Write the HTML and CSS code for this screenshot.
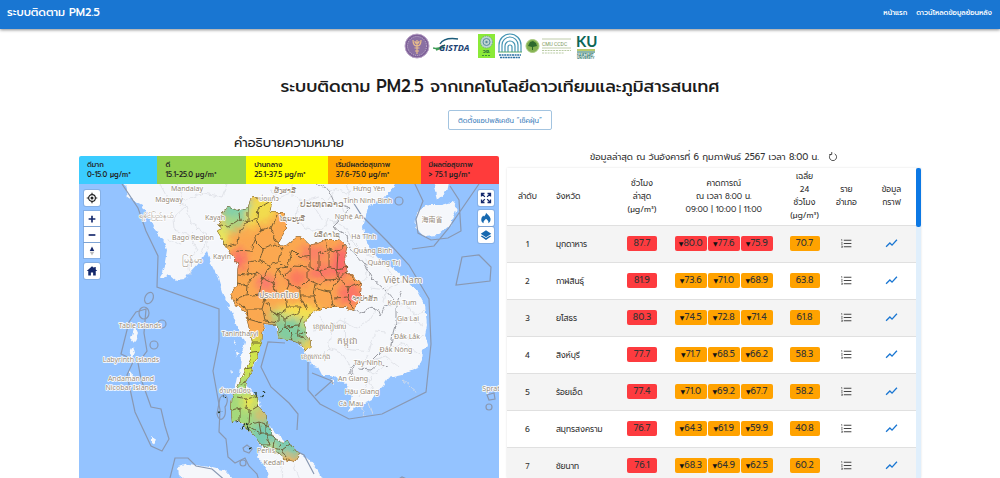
FILE: index.html
```html
<!DOCTYPE html>
<html lang="th">
<head>
<meta charset="utf-8">
<meta name="viewport" content="width=device-width, initial-scale=1">
<title>ระบบติดตาม PM2.5</title>
<link rel="stylesheet" href="styles.css">
</head>
<body>
<svg class="defs" aria-hidden="true">
  <symbol id="list" viewBox="0 0 24 24"><path d="M2 17h2v.5H3v1h1v.5H2v1h3v-4H2v1zm1-9h1V4H2v1h1v3zm-1 3h1.800L2 13.100v.9h3v-1H3.200L5 10.900V10H2v1zm5-6v2h14V5H7zm0 14h14v-2H7v2zm0-6h14v-2H7v2z" fill="#444"/></symbol>
  <symbol id="chart" viewBox="0 0 24 24"><path d="M2 18l7-7 4 4 9-10" fill="none" stroke="#1976d2" stroke-width="2.400"/></symbol>
</svg>
<header class="topbar">
  <a class="brand" href="#">ระบบติดตาม PM2.5</a>
  <nav class="nav"><a href="#">หน้าแรก</a><a href="#">ดาวน์โหลดข้อมูลย้อนหลัง</a></nav>
</header>
<main class="page">
  <div class="logos">
    <svg width="26" height="26" viewBox="0 0 26 26"><circle cx="13" cy="13" r="12" fill="#7d6098" stroke="#b9a3c6"/><circle cx="13" cy="13" r="9.500" fill="#8a70a3" stroke="#d8cbe0" stroke-width=".8" stroke-dasharray="1 1"/><path d="M13 21V7M9 7c0 8 8 8 8 0M11 8c0 3 4 3 4 0M10.500 15h5M11 18h4" fill="none" stroke="#e8bd8b" stroke-width="1.200"/></svg>
    <svg width="42" height="20" viewBox="0 0 42 20"><path d="M0 12c5 2 8-1 12-3M3 14l8-3" fill="none" stroke="#3f9c56" stroke-width="1.500"/><text class="logo-gistda" x="6" y="15">GISTDA</text><path d="M7 8C10 3 18 2 25 3" fill="none" stroke="#1b5b7a" stroke-width="1.400"/></svg>
    <svg width="17" height="26" viewBox="0 0 17 26"><path fill="#8bea38" d="M0 1h17v24H0z"/><circle cx="8.500" cy="9" r="6" fill="#bed5d2" stroke="#6d9b98" stroke-dasharray="1 1"/><circle cx="8.500" cy="9" r="3.500" fill="none" stroke="#5a8ca0"/><circle cx="8.500" cy="9" r="1.200" fill="#5a8ca0"/><text class="logo-vch" x="8.500" y="20">วช.</text><path d="M4 22.500h9" stroke="#3d8d38" stroke-dasharray="2 1"/></svg>
    <svg width="24" height="26" viewBox="0 0 24 26"><g fill="none" stroke="#4494b3" stroke-width="1.200"><path d="M1 19v-7a11 11 0 0 1 22 0v7M4 19v-7a8 8 0 0 1 16 0v7M7 19v-6a5 5 0 0 1 10 0v6M10 19v-5a2 2 0 0 1 4 0v5"/></g><path d="M0 19h24" stroke="#5ba96e"/><path d="M1 22h22M2 24.500h20" stroke="#2b71a3" stroke-width="1.400" stroke-dasharray="2 .6"/></svg>
    <svg width="48" height="20" viewBox="0 0 48 20"><circle cx="7.500" cy="10" r="6.500" fill="#83b150" stroke="#a7ca7c"/><path d="M7 14v-3l-4-1 2-4 3-1 3 2 1 3-4 1v3z" fill="#2d692c"/><path d="M17 3h29M17 12h29" stroke="#afbf95" stroke-width=".8"/><text class="logo-cmu" x="17" y="9.500">CMU CCDC</text><path d="M17 14.500h29M17 17h22" stroke="#b9cba4" stroke-dasharray="2 .8"/></svg>
    <svg width="21" height="28" viewBox="0 0 21 28"><text class="logo-ku" x="0" y="15">KU</text><path d="M1 18h18" stroke="#a2b93b" stroke-width="1.500"/><path d="M1 20h18" stroke="#176a5d"/><text class="logo-small" x="1" y="24">KASETSART</text><text class="logo-small" x="1" y="27">UNIVERSITY</text></svg>
  </div>
  <h1>ระบบติดตาม PM2.5 จากเทคโนโลยีดาวเทียมและภูมิสารสนเทศ</h1>
  <button class="install" type="button">ติดตั้งแอปพลิเคชัน “เช็คฝุ่น”</button>
  <div class="columns">
    <section class="map-panel">
      <h2>คำอธิบายความหมาย</h2>
      <div class="legend">
        <div class="lv1">ดีมาก<br>0-15.0 µg/m³</div>
        <div class="lv2">ดี<br>15.1-25.0 µg/m³</div>
        <div class="lv3">ปานกลาง<br>25.1-37.5 µg/m³</div>
        <div class="lv4">เริ่มมีผลต่อสุขภาพ<br>37.6-75.0 µg/m³</div>
        <div class="lv5">มีผลต่อสุขภาพ<br>&gt; 75.1 µg/m³</div>
      </div>
      <div class="map">
        <svg class="canvas" viewBox="79 184 420 294" preserveAspectRatio="xMidYMin slice" role="img" aria-label="แผนที่ PM2.5">
          <defs>
            <path id="thaiPath" d="M217 232L221 229 219 221 223 210 228 207 237 210 248 207 250 200 253 197 262 198 268 197 272 202 270 212 283 212 286 220 286 230 280 240 280 245 285 246 292 240 298 237 304 239 310 245 318 243 325 240 340 240 347 247 345 258 348 272 356 279 362 282 360 303 353 311 345 308 322 308 313 313 304 323 311 342 310 348 305 351 302 345 295 342 285 340 278 338 277 325 265 324 263 333 262 342 257 357 252 370 245 385 248 393 258 396 258 405 266 413 269 427 275 438 283 443 288 441 292 447 300 453 295 462 285 460 275 452 262 446 257 438 245 427 239 420 232 423 231 410 232 397 237 388 242 377 250 360 252 342 248 325 245 312 235 305 230 293 237 285 237 275 238 265 232 255 225 245z"/>
            <clipPath id="thai"><use href="#thaiPath"/></clipPath>
            <filter id="soft" x="-50%" y="-50%" width="200%" height="200%"><feGaussianBlur stdDeviation="4"/></filter>
            <filter id="rough" color-interpolation-filters="sRGB"><feTurbulence type="fractalNoise" baseFrequency=".18" numOctaves="2" seed="4"/><feDisplacementMap in="SourceGraphic" scale="5" xChannelSelector="R" yChannelSelector="G"/></filter>
          </defs>
          <path class="sea" d="M-400 0h1400v900H-400z"/>
          <g class="land" filter="url(#rough)">
            <path d="M122 176L125 185 128 197 142 205 147 213 153 227 163 240 167 250 165 262 160 278 170 276 176 281 185 280 190 272 199 262 207 252 212 266 218 278 223 295 232 312 238 328 245 342 241 355 240 368 237 383 232 397 231 415 245 427 257 438 262 448 258 457 267 470 268 482 324 482 318 470 308 459 300 453 285 442 270 427 262 410 257 397 250 390 245 382 252 370 257 360 262 340 265 325 275 323 278 338 298 342 305 352 310 357 312 366 318 367 322 375 332 375 345 383 352 393 350 404 348 412 356 408 372 400 382 387 388 378 402 375 418 368 422 360 423 350 428 345 425 335 427 325 425 305 418 292 402 275 390 265 378 258 370 249 365 237 363 227 368 207 385 197 395 185 405 176z"/>
            <path d="M420 210L428 205 441 205 452 202 457 208 450 225 438 235 422 236 415 227 416 218z"/><path d="M431 178h18l-3 14-8 7-2-8z"/>
            <path d="M135 326l3 7-4 10-3-4zM133 346l2 8-5 5 1-9zM130 370l3 4-1 7-2-3zM151 436l4 3-1 5-3-2zM178 467l11-3 20 3 17 4 8 9h-49l-6-5z"/>
            <path d="M234 340l3 3-2 2zM235 350l4 3-3 4zM231 370l2 2-1 2zM331 379l3 1 0 6-3-3z"/>
          </g>
          <g class="faint" filter="url(#rough)">
            <path d="M160 184l8 15 18 7 5 17 16 11 0 16M177 184l7 16 20-7 18 4 5-13M186 206l-13 12 1 12 16 5 8-8M168 240l12 4 10-9 7 15-9 13 2 12M207 234l-5 21M270 190l9 8 11-5 12 8 18-4 9 9 12-3 4 13-11 8M292 184v13M300 201l-4 15 9 13 17 2 6-12 18 9 7 13M328 200l9-12M346 184l4 14 15 5M325 188l21 5 16-9M315 208l8 13M351 240l13 13 10 4M366 257l1 20-7 8M368 262l18 4 8 12M370 288l17 2 15-8M386 287l-3 15M390 306l15-3 8 11 12-3M397 323l14-5 12 8M394 335l18 4 12-4M386 350l17-7 17 12M372 361l14-4 13 10M319 316l12 17-3 15 14 5 9 14M312 330l17-2 11-8 16 8 14-8 7-12M345 319l1 30 23 3 6-21 12 1M330 348l-10 10M368 354l-6 11 11 9 13-8M351 368l4 13 13-3 5 12M360 396l12-20M275 459l7 9 1 12M293 463l7 17M402 379l16 14M361 407l4 9M369 403l4 11"/>
          </g>
          <g class="frontier" filter="url(#rough)"><path d="M317 184l12 6 5 12 16 6-13 15-4 4 14 8 3 13 14 16 8 14 13 12 9 10M353 310l8 3 8-5 8 1 3 7 5-10 11-2 6-13M396 304l0 18-3 11-2 13-12 7-9 9-12-1-10 13M359 369l12 1 7-6 10 3M350 374l5-6M331 378l2 7"/></g>
          <g class="maritime"><path d="M122 184l16 24 8 23 12 25-1 31 62 22v32l-6 30 7 39-1 22 7 7 2 18 7 6 10-5 4 8 8 8 5 18 5 8M308 362v28l12 14 29 15 33-5 44-22 5-48-2-45-20-34-22-24-25-25-9-14M450 186l9 14 2 31-13 7-17 2-13-7-2-14 7-18-9-19M479 184l-31 45-14 17-22 3M456 285l6-28 17-2 12 12-1 14zM285 343l-17-1-7 25 10 20 18 16 9 11-1 16M294 450l10 5 10 19M132 359l-11-5 8-32 7-10 10-3-2 24 3 18-9 12 3 16 10 28 10 2 4 17 4 13-7 12-11-5-16-34-8-37 6-13M170 478l5-20 13 0 8 8 16 3 15 13M397 480l5-3 7 3M312 373l20 8-17 15"/><ellipse cx="149" cy="298" rx="4" ry="6" transform="rotate(25 149 298)"/><ellipse cx="144" cy="313" rx="5" ry="6"/><circle cx="162" cy="324" r="4"/><circle cx="154" cy="345" r="4"/><circle cx="399" cy="201" r="4"/><circle cx="489" cy="407" r="3"/><path d="M487 395l7-2 1 6-6 1zM220 398c6-9 10 3 5 9 2 12-6 17-8 7zM243 448l4-3 5 4-3 4-5-2z"/><circle cx="243" cy="463" r="3"/></g>
          <g filter="url(#rough)">
            <g clip-path="url(#thai)">
              <path class="heat-base" d="M200 180h180v300H200z"/>
              <g filter="url(#soft)">
                <ellipse cx="238" cy="211" rx="17" ry="14" fill="#7fcfac"/><ellipse cx="263" cy="207" rx="13" ry="17" fill="#f2dc4d"/><ellipse cx="221" cy="235" rx="8" ry="14" fill="#e8e85d"/><ellipse cx="232" cy="223" rx="10" ry="8" fill="#a9d784"/><ellipse cx="250" cy="220" rx="5" ry="10" fill="#f2dc4d"/>
                <ellipse cx="239" cy="260" rx="7" ry="11" fill="#fa6d6c"/><ellipse cx="266" cy="283" rx="10" ry="8" fill="#fa786e"/><ellipse cx="314" cy="253" rx="14" ry="8" fill="#fb7f67"/><ellipse cx="341" cy="262" rx="9" ry="17" fill="#fb686c"/><ellipse cx="297" cy="278" rx="10" ry="9" fill="#fb775f"/><ellipse cx="322" cy="272" rx="14" ry="8" fill="#fb7568"/><ellipse cx="350" cy="294" rx="13" ry="11" fill="#fb7566"/>
                <ellipse cx="296" cy="311" rx="24" ry="5" fill="#f7ee4d"/><ellipse cx="292" cy="331" rx="20" ry="14" fill="#82cda0"/><ellipse cx="276" cy="315" rx="8" ry="5" fill="#a5d984"/><ellipse cx="309" cy="322" rx="8" ry="6" fill="#dfe95c"/><ellipse cx="307" cy="347" rx="5" ry="6" fill="#e4ec50"/><path d="M235 337h34v60h-40z" fill="#d0e44e"/><path d="M215 378h50v60h-50z" fill="#a4d97c"/><ellipse cx="278" cy="440" rx="28" ry="24" fill="#78cbb2"/><ellipse cx="263" cy="417" rx="10" ry="10" fill="#86cfa0"/><ellipse cx="249" cy="402" rx="7" ry="6" fill="#ffea30"/><circle cx="261" cy="415" r="5" fill="#ffae28"/><circle cx="286" cy="459" r="6" fill="#ffb32d"/><circle cx="272" cy="447" r="4" fill="#f4e53c"/>
              </g>
            </g>
            <g class="province" clip-path="url(#thai)">
              <path d="M238 209l2 10 8 3 0-15M248 222l-8 9-2 12-10 3-9-8M240 219l-12 8-10-3M248 222l9-4 1-10 10-6M257 218l4 13-7 9-3 12-15-1M261 231l10-3 6-13M271 228l5 13 5 3M254 240l9 9-3 11-11 2-2 13-9-1M263 249l12-5 7 5-3 13-10 3-9-5M247 275l10-2 6 5 7-13M232 282l15 3 10-12M247 285l-1 11-11 4M246 296l13-2 4-16 10 5 4-14 10-2 5-18M279 262l8 5M235 300l12 9 15 0 3-10-6-5M265 299l11-6-3-10M276 293l9 4 4-14-12-14M285 297l2 11-9 7-7-4-6-12M247 309l1 10 14 4M263 309l2 12 13 2 0-8M268 325l5 6M275 313l10 5 14-6 1-5-13 0M289 283l11 5 8-8 0-13-14-1-9 10M292 249l8 8 10-2 0-12M310 255l0 12 9 4 0-17 9-5-4-10M319 271l10-3 0-19 9 3 8-9M338 252l-1 17-8-1M337 269l11-3M308 280l12 5 7-5-8-9M327 280l12-1-2-10M339 279l7-8 9 10M300 288l0 8 7 13M300 296l14 0 2-12M314 296l4 13M316 289l14 3 9-13M330 292l4 17M339 279l10 8-2 10-13 1M347 297l7 12M349 287l12-4M285 318l0 9 14-1 4-11M285 327l-6 5M299 326l-2 8 9 6M285 327l7 7-2 8M299 334l9-3M250 343h11M249 353l10-2M246 369l10-2M240 384l13-5M237 397l10 2 10-3M232 410l14-3 4 3 10-6M247 399l-1 8M240 410l0 14-4 2M250 410l-1 15-10-1M249 425l10-3 13 5M259 422l2 12-12-7M261 434l14 0M266 422l0 12 4 11-10 0M275 434l-2 14 9 2 12-9M279 447l5-9 8 2M282 450l6 9"/>
              <use href="#thaiPath"/>
            </g>
            <path class="islands" d="M223 396l2 1M219 411l2 1M236 423l2-2M241 428l3-3M246 424l3 6M248 449l4-1M256 392v4M262 391l2 2M262 396l1 2"/>
          </g>
          <g class="labels">
            <text x="187" y="191">Mandalay</text><text x="169" y="202">Magway</text><text x="156" y="218">ရခိုင်ပြည်နယ်</text><text x="215" y="220">Kayah</text><text x="193" y="240">Bago Region</text><text x="222" y="259">Kayin</text><text class="country" x="192" y="263">မြန်မာ</text>
            <text x="269" y="201">บ่อแก้ว</text><text x="285" y="193">ຜົ້ງສາລີ</text><text class="country" x="322" y="207">ປະເທດລາວ</text><text x="292" y="221">ໄຊຍະບູລີ</text><text x="369" y="191">Hưng Yên</text><text x="368" y="203">Tỉnh Ninh Bình</text><text x="349" y="219">Nghệ An</text><text x="327" y="237">ບໍລິຄຳໄຊ</text><text x="364" y="239">Hà Tĩnh</text><text x="373" y="253">Quảng Bình</text><text x="384" y="265">Quảng Trị</text><text class="country" x="403" y="283">Việt Nam</text><text x="365" y="301">ຈຳປາສັກ</text><text x="402" y="305">Kon Tum</text><text x="408" y="321">Gia Lai</text><text x="407" y="339">Đắk Lắk</text><text x="396" y="352">Đắk Nông</text><text x="368" y="365">Tây Ninh</text><text x="353" y="381">An Giang</text><text x="362" y="394">Hậu Giang</text><text x="351" y="406">Cà Mau</text>
            <text class="country" x="279" y="298">ประเทศไทย</text><text x="329" y="329">ខេត្តសៀមរាប</text><text class="country" x="347" y="344">កម្ពុជា</text><text x="315" y="359">ខេត្តកោះកុង</text><text x="240" y="336">Tanintharyi</text><text x="140" y="328">Table Islands</text><text x="131" y="362">Labyrinth Islands</text><text x="131" y="381">Andaman and</text><text x="131" y="390">Nicobar Islands</text><text x="235" y="393">อำเภอเมือง</text><text x="266" y="453">Perlis</text><text x="274" y="465">Kedah</text><text x="432" y="222">海南省</text><text x="491" y="391">Sprat</text>
          </g>
        </svg>
        <div class="controls left">
          <button type="button" aria-label="ตำแหน่งของฉัน"><svg viewBox="0 0 16 16"><circle cx="8" cy="8" r="4.500" fill="none" stroke="#222" stroke-width="1.500"/><circle cx="8" cy="8" r="2" fill="#222"/><path d="M8 1v3M8 12v3M1 8h3M12 8h3" stroke="#222" stroke-width="1.500"/></svg></button>
          <div class="group">
            <button type="button" aria-label="ซูมเข้า"><svg viewBox="0 0 16 16"><path d="M8 3.500v9M3.500 8h9" stroke="#14286b" stroke-width="2.200"/></svg></button>
            <button type="button" aria-label="ซูมออก"><svg viewBox="0 0 16 16"><path d="M3.500 8h9" stroke="#14286b" stroke-width="2.200"/></svg></button>
            <button type="button" aria-label="ทิศเหนือ"><svg viewBox="0 0 16 16"><path d="M8 2l3 6H5z" fill="#14286b"/><path d="M8 14l3-5H5z" fill="#bbb"/></svg></button>
          </div>
          <button type="button" aria-label="หน้าหลัก"><svg viewBox="0 0 16 16"><path d="M8 1.500L1 8h2v6h3.500v-4h3v4H13V8h2l-2-2V2.500h-2v1.600z" fill="#14286b"/></svg></button>
        </div>
        <div class="controls right">
          <button type="button" aria-label="เต็มจอ"><svg viewBox="0 0 16 16"><path d="M2 6V2h4M10 2h4v4M14 10v4h-4M6 14H2v-4M2 2l4.500 4.500M14 2L9.500 6.500M14 14L9.500 9.500M2 14l4.500-4.500" fill="none" stroke="#14286b" stroke-width="1.700"/></svg></button>
          <button type="button" aria-label="จุดความร้อน"><svg viewBox="0 0 16 16"><path d="M8 1c1 2 5 3.500 6 7.500.5 3-1 5.500-3 6.500 1-3-1-4-3-6-1.500 2-4 3-3 6-3-1-4-4-3-7 .6-1.600 1.600-2.200 2-3.500l1.500 1.500C7 4 8 3 8 1z" fill="#1769b0"/></svg></button>
          <button type="button" aria-label="ชั้นข้อมูล"><svg viewBox="0 0 16 16"><path d="M8 1.500l7 4.700-7 4.700-7-4.700zM2.500 8.500L8 12l5.500-3.500L15 9.700l-7 4.800-7-4.800z" fill="#1769b0"/></svg></button>
        </div>
      </div>
    </section>
    <section class="data-panel">
      <div class="updated"><span>ข้อมูลล่าสุด ณ วันอังคารที่ 6 กุมภาพันธ์ 2567 เวลา 8:00 น.</span><button type="button" aria-label="รีเฟรช"><svg viewBox="0 0 12 12"><path d="M8 2.200A4.300 4.300 0 1 1 4 2.200M4.500 0v3h-3" fill="none" stroke="#333"/></svg></button></div>
      <div class="scroller">
        <table>
          <colgroup><col class="c-no"><col class="c-name"><col class="c-now"><col class="c-next"><col class="c-avg"><col class="c-list"><col class="c-graph"></colgroup>
          <thead><tr><th>ลำดับ</th><th class="name">จังหวัด</th><th>ชั่วโมง<br>ล่าสุด<br>(µg/m³)</th><th>คาดการณ์<br>ณ เวลา 8:00 น.<br>09:00 | 10:00 | 11:00</th><th>เฉลี่ย<br>24<br>ชั่วโมง<br>(µg/m³)</th><th>ราย<br>อำเภอ</th><th>ข้อมูล<br>กราฟ</th></tr></thead>
          <tbody>
            <tr><td>1</td><td class="name">มุกดาหาร</td><td><span class="tag red">87.7</span></td><td><div class="tags"><span class="tag red"><i>▼</i>80.0</span><span class="tag red"><i>▼</i>77.6</span><span class="tag red"><i>▼</i>75.9</span></div></td><td><span class="tag">70.7</span></td><td><svg class="ico"><use href="#list"/></svg></td><td><svg class="ico"><use href="#chart"/></svg></td></tr>
            <tr><td>2</td><td class="name">กาฬสินธุ์</td><td><span class="tag red">81.9</span></td><td><div class="tags"><span class="tag"><i>▼</i>73.6</span><span class="tag"><i>▼</i>71.0</span><span class="tag"><i>▼</i>68.9</span></div></td><td><span class="tag">63.8</span></td><td><svg class="ico"><use href="#list"/></svg></td><td><svg class="ico"><use href="#chart"/></svg></td></tr>
            <tr><td>3</td><td class="name">ยโสธร</td><td><span class="tag red">80.3</span></td><td><div class="tags"><span class="tag"><i>▼</i>74.5</span><span class="tag"><i>▼</i>72.8</span><span class="tag"><i>▼</i>71.4</span></div></td><td><span class="tag">61.8</span></td><td><svg class="ico"><use href="#list"/></svg></td><td><svg class="ico"><use href="#chart"/></svg></td></tr>
            <tr><td>4</td><td class="name">สิงห์บุรี</td><td><span class="tag red">77.7</span></td><td><div class="tags"><span class="tag"><i>▼</i>71.7</span><span class="tag"><i>▼</i>68.5</span><span class="tag"><i>▼</i>66.2</span></div></td><td><span class="tag">58.3</span></td><td><svg class="ico"><use href="#list"/></svg></td><td><svg class="ico"><use href="#chart"/></svg></td></tr>
            <tr><td>5</td><td class="name">ร้อยเอ็ด</td><td><span class="tag red">77.4</span></td><td><div class="tags"><span class="tag"><i>▼</i>71.0</span><span class="tag"><i>▼</i>69.2</span><span class="tag"><i>▼</i>67.7</span></div></td><td><span class="tag">58.2</span></td><td><svg class="ico"><use href="#list"/></svg></td><td><svg class="ico"><use href="#chart"/></svg></td></tr>
            <tr><td>6</td><td class="name">สมุทรสงคราม</td><td><span class="tag red">76.7</span></td><td><div class="tags"><span class="tag"><i>▼</i>64.3</span><span class="tag"><i>▼</i>61.9</span><span class="tag"><i>▼</i>59.9</span></div></td><td><span class="tag">40.8</span></td><td><svg class="ico"><use href="#list"/></svg></td><td><svg class="ico"><use href="#chart"/></svg></td></tr>
            <tr><td>7</td><td class="name">ชัยนาท</td><td><span class="tag red">76.1</span></td><td><div class="tags"><span class="tag"><i>▼</i>68.3</span><span class="tag"><i>▼</i>64.9</span><span class="tag"><i>▼</i>62.5</span></div></td><td><span class="tag">60.2</span></td><td><svg class="ico"><use href="#list"/></svg></td><td><svg class="ico"><use href="#chart"/></svg></td></tr>
          </tbody>
        </table>
        <div class="track"><div class="thumb"></div></div>
      </div>
    </section>
  </div>
</main>
</body>
</html>
```
FILE: styles.css
```css
* { box-sizing: border-box; }
body {
  margin: 0;
  height: 100vh;
  display: flex;
  flex-direction: column;
  overflow: hidden;
  background: #fff;
  color: #333;
  font-family: Prompt, Kanit, "Noto Sans Thai", "Noto Sans", "Open Sans", sans-serif;
  font-size: 8px;
}
button { font: inherit; cursor: pointer; padding: 0; }
svg { display: block; flex: none; }
.defs { position: absolute; width: 0; height: 0; }

.topbar {
  flex: none;
  display: flex;
  justify-content: space-between;
  align-items: center;
  height: 29px;
  padding: 0 8px 4px 7px;
  background: #1976d2;
  box-shadow: 0 1px 3px rgba(0, 0, 0, .45);
}
.topbar a { color: #fff; text-decoration: none; }
.brand { font-size: 11px; font-weight: 500; }
.nav { display: flex; gap: 9px; font-size: 7px; font-weight: 500; }

.page {
  flex: 1;
  min-height: 0;
  display: flex;
  flex-direction: column;
  align-items: center;
}
.logos {
  display: flex;
  align-items: center;
  gap: 3px;
  height: 34px;
}
.logo-gistda { font: italic bold 9px "Open Sans", sans-serif; fill: #1b4173; }
.logo-vch { font-size: 5px; font-weight: bold; fill: #276e39; text-anchor: middle; }
.logo-cmu { font: 5px Roboto, sans-serif; fill: #79965a; }
.logo-ku { font: bold 15px Lato, sans-serif; fill: #0b6657; }
.logo-small { font: bold 3px Lato, sans-serif; fill: #0b6657; }

h1, h2 { margin: 0; font-weight: 500; color: #1c1c1c; }
h1 { margin-top: 9px; font-size: 17px; line-height: 28px; }
.install {
  margin-top: 10px;
  height: 20px;
  padding: 0 9px;
  border: 1px solid #a3c4e0;
  border-radius: 2px;
  background: #fff;
  color: #4583bd;
  font-size: 7px;
}

.columns {
  flex: 1;
  min-height: 0;
  width: 100%;
  padding: 2px 79px 0;
  display: grid;
  grid-template-columns: minmax(0, 420fr) minmax(0, 414fr);
  gap: 8px;
}
.map-panel, .data-panel { display: flex; flex-direction: column; min-height: 0; }
h2 { padding-bottom: 2px; font-size: 13px; line-height: 22px; font-weight: 400; text-align: center; }
.legend {
  display: grid;
  grid-template-columns: 77fr 87fr 80fr 91fr 77fr;
  border-radius: 2px 2px 0 0;
  overflow: hidden;
  color: #222;
  font-size: 7px;
  font-weight: 500;
  line-height: 10px;
}
.legend div { padding: 4px 0 4px 8px; white-space: nowrap; }
.lv1 { background: #3bccff; }
.lv2 { background: #92d050; }
.lv3 { background: #ff0; }
.lv4 { background: #ffa200; }
.lv5 { background: #ff3b3b; }

.map { position: relative; flex: 1; min-height: 0; overflow: hidden; }
.canvas { width: 100%; height: 100%; }
.sea { fill: #94c3ff; }
.land { fill: #f5f7fb; }
.faint, .frontier, .maritime, .province { fill: none; }
.faint { stroke: #dcdee4; stroke-width: .8; }
.frontier { stroke: #999ba2; stroke-width: 1; }
.maritime { stroke: #8998b2; stroke-width: 1.2; }
.heat-base { fill: #fba850; }
.province { stroke: #65542e; stroke-width: .9; }
.islands { stroke: #263b2c; stroke-width: 1.4; fill: none; }
.labels {
  font: 7px "Noto Sans", "Noto Sans Thai", "Noto Sans CJK SC", sans-serif;
  fill: #95897a;
  text-anchor: middle;
  stroke: #fff;
  stroke-width: 1.6px;
  stroke-linejoin: round;
  paint-order: stroke;
}
.labels .country { font-size: 9px; }

.controls {
  position: absolute;
  top: 6px;
  display: flex;
  flex-direction: column;
}
.left { left: 5px; gap: 5px; }
.right { right: 5px; gap: 1px; }
.controls button {
  display: flex;
  align-items: center;
  justify-content: center;
  width: 16px;
  height: 16px;
  border: 0;
  border-radius: 2px;
  background: #fff;
  box-shadow: 0 0 0 1px rgba(110, 140, 180, .35);
}
.controls svg { width: 12px; height: 12px; }
.right button:first-child { margin-bottom: 3px; }
.group { display: flex; flex-direction: column; gap: 1px; }
.group button { height: 15px; border-radius: 0; }

.updated {
  display: flex;
  justify-content: center;
  align-items: center;
  gap: 9px;
  height: 36px;
  padding: 13px 0 0;
  font-size: 9px;
  line-height: 20px;
}
.updated button { border: 0; background: none; }
.updated svg { width: 10px; height: 10px; }
.scroller {
  flex: 1;
  min-height: 0;
  display: flex;
  align-items: stretch;
  overflow: hidden;
  box-shadow: 0 0 2px rgba(0, 0, 0, .12);
}
table {
  flex: 1;
  align-self: flex-start;
  table-layout: fixed;
  border-collapse: collapse;
}
.c-no { width: 10%; }
.c-name { width: 17.5%; }
.c-now { width: 11%; }
.c-next { width: 29%; }
.c-avg { width: 10.5%; }
.c-list { width: 10%; }
.c-graph { width: 12%; }
th, td { padding: 0; text-align: center; vertical-align: middle; }
th { height: 57px; font-weight: 400; line-height: 13px; }
td { height: 37px; border-top: 1px solid #e0e0e0; }
.name { padding-left: 8px; text-align: left; }
tbody tr:nth-child(odd) { background: #f4f4f4; }
.tags { display: flex; justify-content: center; gap: 1px; }
.tag {
  display: inline-block;
  width: 30px;
  border-radius: 2px;
  background: #ffa200;
  font-size: 9px;
  line-height: 15px;
  white-space: nowrap;
}
.tags .tag { width: 32px; }
.tag.red { background: #fd3b3f; }
.tag i { font: 6px "DejaVu Sans", sans-serif; color: #111; }
.ico { width: 13px; height: 13px; margin: 0 auto; }
.track { width: 5px; background: #e0effc; }
.thumb { height: 59px; border-radius: 2px; background: #0c78e4; }
```
